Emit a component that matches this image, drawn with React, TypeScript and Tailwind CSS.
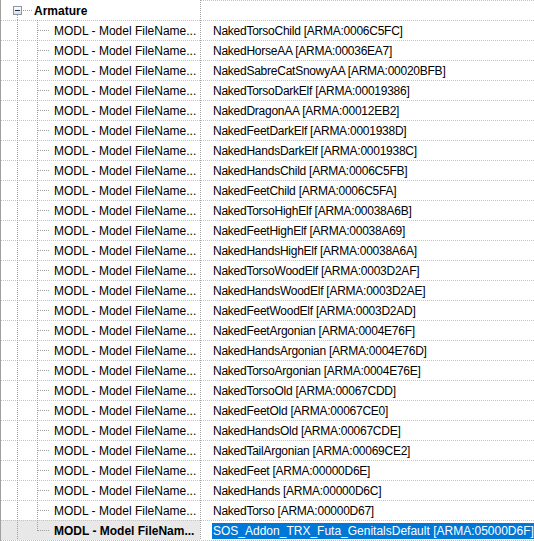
import React from "react";

const values: string[] = [
  "NakedTorsoChild [ARMA:0006C5FC]",
  "NakedHorseAA [ARMA:00036EA7]",
  "NakedSabreCatSnowyAA [ARMA:00020BFB]",
  "NakedTorsoDarkElf [ARMA:00019386]",
  "NakedDragonAA [ARMA:00012EB2]",
  "NakedFeetDarkElf [ARMA:0001938D]",
  "NakedHandsDarkElf [ARMA:0001938C]",
  "NakedHandsChild [ARMA:0006C5FB]",
  "NakedFeetChild [ARMA:0006C5FA]",
  "NakedTorsoHighElf [ARMA:00038A6B]",
  "NakedFeetHighElf [ARMA:00038A69]",
  "NakedHandsHighElf [ARMA:00038A6A]",
  "NakedTorsoWoodElf [ARMA:0003D2AF]",
  "NakedHandsWoodElf [ARMA:0003D2AE]",
  "NakedFeetWoodElf [ARMA:0003D2AD]",
  "NakedFeetArgonian [ARMA:0004E76F]",
  "NakedHandsArgonian [ARMA:0004E76D]",
  "NakedTorsoArgonian [ARMA:0004E76E]",
  "NakedTorsoOld [ARMA:00067CDD]",
  "NakedFeetOld [ARMA:00067CE0]",
  "NakedHandsOld [ARMA:00067CDE]",
  "NakedTailArgonian [ARMA:00069CE2]",
  "NakedFeet [ARMA:00000D6E]",
  "NakedHands [ARMA:00000D6C]",
  "NakedTorso [ARMA:00000D67]",
  "SOS_Addon_TRX_Futa_GenitalsDefault [ARMA:05000D6F]",
];

const LINE = "#a0a0a0";

// dotted separator drawn along the top edge of a cell
const topDots =
  "bg-[repeating-linear-gradient(to_right,#c4c4c4_0_1px,transparent_1px_2px)] bg-no-repeat bg-[length:100%_1px] bg-top";

function HeaderTree() {
  return (
    <svg width="33" height="20" className="shrink-0" shapeRendering="crispEdges">
      <line x1="16.5" y1="15" x2="16.5" y2="20" stroke={LINE} strokeDasharray="1 1" />
      <line x1="22" y1="10.5" x2="31" y2="10.5" stroke={LINE} strokeDasharray="1 1" />
      <defs>
        <linearGradient id="boxfill" x1="0" y1="0" x2="0" y2="1">
          <stop offset="0" stopColor="#ffffff" />
          <stop offset="1" stopColor="#dcdcdc" />
        </linearGradient>
      </defs>
      <rect x="12.5" y="6.5" width="8" height="8" fill="url(#boxfill)" stroke="#8a96a8" />
      <line x1="14" y1="10.5" x2="19" y2="10.5" stroke="#1e3050" />
    </svg>
  );
}

function ChildTree({ last }: { last: boolean }) {
  return (
    <svg width="53" height="20" className="shrink-0" shapeRendering="crispEdges">
      <line x1="16.5" y1="0" x2="16.5" y2="20" stroke={LINE} strokeDasharray="1 1" />
      <line x1="36.5" y1="0" x2="36.5" y2={last ? 11 : 20} stroke={LINE} strokeDasharray="1 1" />
      <line x1="37" y1="10.5" x2="49" y2="10.5" stroke={LINE} strokeDasharray="1 1" />
    </svg>
  );
}

function Divider() {
  return (
    <div className="w-px shrink-0 bg-[repeating-linear-gradient(to_bottom,#a0a0a0_0_1px,transparent_1px_2px)]" />
  );
}

export default function App() {
  return (
    <div
      className="w-[534px] h-[541px] overflow-hidden bg-white border-l border-[#a0a0a0] text-[12px] text-black"
      style={{ fontFamily: '"Liberation Sans", Arial, sans-serif' }}
    >
      {/* group header */}
      <div className="flex h-[20px]">
        <div className="w-[199px] shrink-0 flex items-center">
          <HeaderTree />
          <span className="font-bold leading-none pt-px">Armature</span>
        </div>
        <Divider />
        <div className={`flex-1 ${topDots}`} />
      </div>

      {values.map((v, i) => {
        const last = i === values.length - 1;
        return (
          <div key={i} className="flex h-[20px]">
            <div
              className={`w-[199px] shrink-0 flex items-center ${topDots} ${
                last ? "bg-[#e8e8e8]" : ""
              }`}
            >
              <ChildTree last={last} />
              <span className={`whitespace-nowrap leading-none pt-px ${last ? "font-bold" : ""}`}>
                {last ? "MODL - Model FileNam..." : "MODL - Model FileName..."}
              </span>
            </div>
            <Divider />
            <div className={`flex-1 flex items-center pl-[11px] ${topDots}`}>
              {last ? (
                <div className="flex items-stretch h-[16px] mt-px">
                  <span className="bg-[#0078d7] text-white whitespace-nowrap px-px flex items-center">
                    {v}
                  </span>
                  <span className="w-[2px] bg-[#f59a3c]" />
                </div>
              ) : (
                <span className="whitespace-nowrap leading-none pt-px pl-px tracking-[-0.25px]">{v}</span>
              )}
            </div>
          </div>
        );
      })}
      <div className={`h-px ${topDots}`} />
    </div>
  );
}
